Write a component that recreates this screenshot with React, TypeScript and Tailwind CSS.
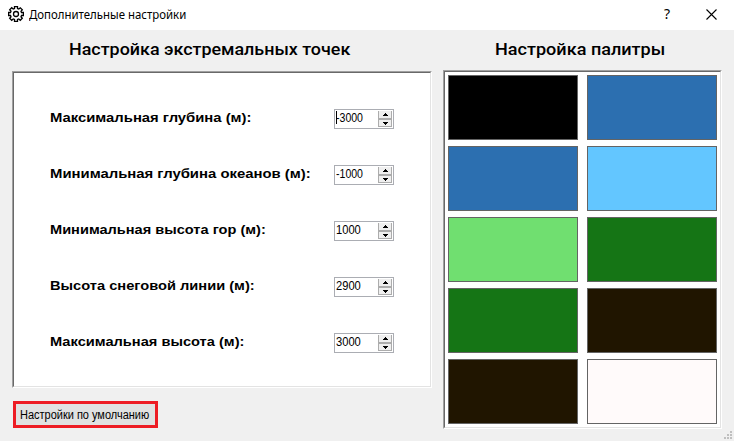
import React from "react";

const rows = [
  { label: "Максимальная глубина (м):", value: "-3000", width: "w-[202px]", focused: true },
  { label: "Минимальная глубина океанов (м):", value: "-1000", width: "w-[261px]" },
  { label: "Минимальная высота гор (м):", value: "1000", width: "w-[216px]" },
  { label: "Высота снеговой линии (м):", value: "2900", width: "w-[205px]" },
  { label: "Максимальная высота (м):", value: "3000", width: "w-[194px]" },
];

const swatches = [
  "bg-[#000000]", "bg-[#2c6fb0]",
  "bg-[#2c6fb0]", "bg-[#63c6ff]",
  "bg-[#70df70]", "bg-[#157515]",
  "bg-[#157515]", "bg-[#201500]",
  "bg-[#201500]", "bg-[#fffafa]",
];

/* Text stretched or condensed horizontally to fill the width of its box. */
function FitText({ children, className }: { children: string; className: string }) {
  const box = React.useRef<HTMLDivElement>(null);
  const text = React.useRef<HTMLSpanElement>(null);
  const [scale, setScale] = React.useState(1);
  React.useLayoutEffect(() => {
    const fit = () => {
      if (box.current && text.current) setScale(box.current.clientWidth / text.current.offsetWidth);
    };
    fit();
    document.fonts.ready.then(fit);
  }, []);
  return (
    <div ref={box} className={`shrink-0 whitespace-nowrap ${className}`}>
      <span ref={text} className="inline-block origin-left" style={{ transform: `scaleX(${scale})` }}>
        {children}
      </span>
    </div>
  );
}

function Sunken({ className, children }: { className: string; children: React.ReactNode }) {
  return (
    <div className={`border border-t-[#a0a0a0] border-l-[#a0a0a0] border-r-white border-b-white ${className}`}>
      <div className="h-full border border-t-[#696969] border-l-[#696969] border-r-[#e3e3e3] border-b-[#e3e3e3] bg-white">
        {children}
      </div>
    </div>
  );
}

function Arrow({ up }: { up?: boolean }) {
  return (
    <svg width="5" height="3" viewBox="0 0 5 3" shapeRendering="crispEdges">
      <path d={up ? "M2 0h1v1h1v1h1v1H0V2h1V1h1z" : "M0 0h5v1H4v1H3v1H2V2H1V1H0z"} />
    </svg>
  );
}

function SpinBox({ value, focused }: { value: string; focused?: boolean }) {
  return (
    <div className="flex h-5 w-[60px] border border-[#abadb3] bg-white font-['Liberation_Sans',sans-serif] text-[12.500px] leading-[17px]">
      <div className="flex w-[43px] items-start pl-px">
        {focused && <span className="mt-px -mr-px h-[13px] w-px shrink-0 bg-black" />}
        <FitText className={`h-[17px] ${value[0] === "-" ? "w-[27px]" : "w-[25px]"}`}>{value}</FitText>
      </div>
      <div className="mt-px flex h-4 w-[14px] flex-col">
        <div className="flex h-2 items-center justify-center border-x border-b border-[#acacac] bg-[#efefef]"><Arrow up /></div>
        <div className="flex h-2 items-center justify-center border border-[#acacac] bg-[#efefef]"><Arrow /></div>
      </div>
    </div>
  );
}

export default function App() {
  return (
    <div className="flex h-[441px] w-[734px] flex-col overflow-hidden bg-[#f0f0f0] font-['Liberation_Sans',sans-serif] text-black">
      <header className="flex h-[30px] items-center bg-white pl-2">
        <svg className="mb-[2px]" width="16" height="16" viewBox="0 0 16 16" fill="none" stroke="#000" strokeWidth="1.300">
          <path d="M6.500.6h3v2l1.300.5 1.500-1.300 2 2-1.300 1.500.5 1.200h1.900v3h-1.900l-.5 1.300 1.300 1.500-2 2-1.500-1.300-1.300.5v1.900h-3v-1.900l-1.300-.5-1.500 1.300-2-2L3 10.800l-.5-1.300H.6v-3h1.900L3 5.200 1.700 3.700l2-2L5.200 3l1.300-.5z" />
          <circle cx="8" cy="8" r="2.500" />
        </svg>
        <FitText className="ml-[5px] h-[18px] w-[157px] font-['Noto_Sans',sans-serif] text-[12px] leading-[18px]">Дополнительные настройки</FitText>
        <span className="mb-[2px] ml-auto w-[10px] text-center font-['Noto_Sans',sans-serif] text-[14px] leading-[18px]">?</span>
        <svg className="mr-[17px] mb-[2px] ml-[34px]" width="11" height="11" viewBox="0 0 11 11" stroke="#000" strokeWidth="1.1">
          <path d="M.5.5l10 10M10.500.5l-10 10" />
        </svg>
      </header>
      <main className="flex flex-1 pl-3">
        <section className="flex w-[420px] flex-col">
          <h1 className="flex h-[41px] pt-[7px] pl-[57px]">
            <FitText className="h-6 w-[281px] font-['Roboto',sans-serif] text-[17px] leading-6 font-medium">Настройка экстремальных точек</FitText>
          </h1>
          <Sunken className="h-[317px]">
            <div className="flex flex-col gap-9 pt-9 pl-9">
              {rows.map((r) => (
                <div key={r.label} className="flex h-5 w-[344px] justify-between">
                  <FitText className={`h-[18px] text-[13.500px] leading-[18px] font-bold ${r.width}`}>{r.label}</FitText>
                  <SpinBox value={r.value} focused={r.focused} />
                </div>
              ))}
            </div>
          </Sunken>
          <button className="mt-[13px] ml-px flex h-[27px] w-[145px] border-[3px] border-[#ed1c24] bg-[#e1e1e1] pl-1 text-left">
            <FitText className="h-[21px] w-[129px] text-[12px] leading-[22px]">Настройки по умолчанию</FitText>
          </button>
        </section>
        <section className="ml-[11px] flex w-[279px] flex-col">
          <h1 className="flex h-10 pt-[7px] pl-[52px]">
            <FitText className="h-6 w-[170px] font-['Roboto',sans-serif] text-[17px] leading-6 font-medium">Настройка палитры</FitText>
          </h1>
          <Sunken className="h-[359px]">
            <div className="grid grid-cols-2 gap-x-[9px] gap-y-1.5 p-[3px]">
              {swatches.map((c, i) => (
                <div key={i} className={`h-[65px] border border-[#646464] ${c}`} />
              ))}
            </div>
          </Sunken>
        </section>
        <svg className="mt-auto mr-[2px] mb-[2px] ml-auto" width="8" height="8" viewBox="0 0 8 8" fill="#bfbfbf" shapeRendering="crispEdges">
          <path d="M6 0h2v2H6zM3 3h2v2H3zM6 3h2v2H6zM0 6h2v2H0zM3 6h2v2H3zM6 6h2v2H6z" />
        </svg>
      </main>
    </div>
  );
}
